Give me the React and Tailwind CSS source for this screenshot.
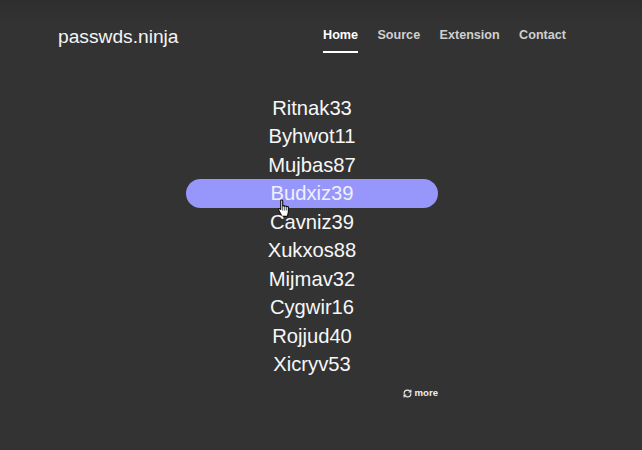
import React from 'react';
import { RefreshCw } from 'lucide-react';

const passwords = ['Ritnak33', 'Byhwot11', 'Mujbas87', 'Budxiz39', 'Cavniz39', 'Xukxos88', 'Mijmav32', 'Cygwir16', 'Rojjud40', 'Xicryv53'];
const links = ['Home', 'Source', 'Extension', 'Contact'];

const HandCursor = () => (
  <svg width="14" height="19" viewBox="0 0 13 18" className="absolute left-[91px] top-[20px]">
    <path
      d="M3.5 1.2c.8-.6 1.8 0 1.8 1v4.6c.3-.6 1.6-.7 1.9.2.4-.6 1.6-.5 1.9.3.5-.4 1.6-.2 1.7.8.1 1.6.1 3.4-.3 5l-.8 3.4H4.6L1.5 10.6c-.6-1 .4-2 1.3-1.3l.6.6V2.2c0-.4 0-.8.1-1z"
      fill="#fff"
      stroke="#111"
      strokeWidth="1.1"
      strokeLinejoin="round"
    />
    <path d="M5.3 7v4M7.2 7v4M9.1 7.4V11" stroke="#111" strokeWidth=".7" fill="none" />
  </svg>
);

export default function App() {
  return (
    <div className="w-[642px] h-[450px] overflow-hidden bg-[linear-gradient(#2e2e2e,#333333_24px)] text-white font-['Liberation_Sans',Arial,sans-serif]">
      {/* Header */}
      <header className="flex items-start justify-between pl-[58px] pr-[76px] pt-[25px]">
        <a className="pt-[1px] text-[19.2px] leading-[22px] text-[#f5f5f5]">passwds.ninja</a>
        <nav className="flex gap-[19.4px] pt-[1px]">
          {links.map((link, i) => (
            <a
              key={link}
              className={`h-[27px] text-[12.6px] leading-[18px] font-bold ${
                i === 0 ? 'text-white border-b-2 border-white' : 'text-[#cfcfcf]'
              }`}
            >
              {link}
            </a>
          ))}
        </nav>
      </header>

      {/* Password list */}
      <main className="flex justify-center pr-[18px] pt-[40.5px]">
        <div className="w-[252px]">
          {passwords.map((password, i) => (
            <div
              key={password}
              className={`relative h-[28.5px] text-center text-[20.2px] leading-[28.5px] ${
                i === 3 ? 'rounded-full bg-[#9797fb] text-[#f0f0ff]' : 'text-[#f7f7f7]'
              }`}
            >
              {password}
              {i === 3 && <HandCursor />}
            </div>
          ))}
          <div className="mt-[7.5px] flex items-center justify-end gap-[3px] text-[9.6px] leading-[14px] font-bold text-[#eeeeee]">
            <RefreshCw size={9} strokeWidth={3} />
            <span>more</span>
          </div>
        </div>
      </main>
    </div>
  );
}
